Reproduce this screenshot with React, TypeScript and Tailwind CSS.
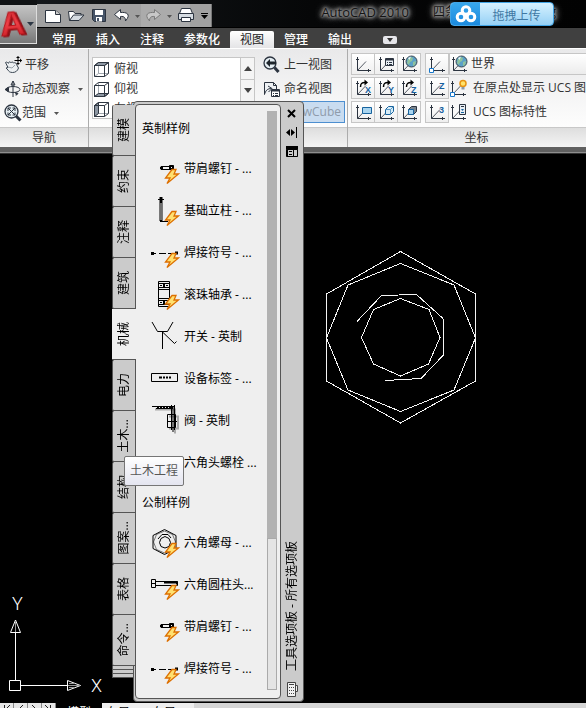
import type { ReactNode } from "react";

const ribbonTabs = ["常用", "插入", "注释", "参数化", "视图", "管理", "输出"];

const paletteTabs = [
  "建模", "约束", "注释", "建筑", "机械", "电力", "土木...", "结构", "图案...", "表格", "命令...",
];

const imperialTools = [
  { label: "带肩螺钉 - ...", icon: "screw", flash: true },
  { label: "基础立柱 - ...", icon: "post", flash: true },
  { label: "焊接符号 - ...", icon: "weld", flash: true },
  { label: "滚珠轴承 - ...", icon: "bearing", flash: true },
  { label: "开关 - 英制", icon: "switch", flash: false },
  { label: "设备标签 - ...", icon: "tag", flash: false },
  { label: "阀 - 英制", icon: "valve", flash: false },
  { label: "六角头螺栓 ...", icon: "bolt", flash: false },
];

const metricTools = [
  { label: "六角螺母 - ...", icon: "nut", flash: true },
  { label: "六角圆柱头...", icon: "bolt", flash: true },
  { label: "带肩螺钉 - ...", icon: "screw", flash: true },
  { label: "焊接符号 - ...", icon: "weld", flash: true },
];

export default function App() {
  return (
    <div className="relative flex h-screen flex-col overflow-hidden bg-black font-['Open_Sans','Noto_Sans_CJK_SC',sans-serif] text-xs leading-4 text-[#333]">
      <Header />
      <Ribbon />
      <div className="h-[5px] shrink-0 bg-[#606060]" />
      <div className="h-px shrink-0 bg-[#8e8e8e]" />
      <Drawing />
      <LayoutTabs />
      <ToolPalette />
    </div>
  );
}

/* ---------- HEADER ---------- */

function Header() {
  return (
    <header className="flex h-12 shrink-0 bg-[#404040]">
      <div className="bg-[#404040]">
        <div className="h-[5px] bg-[#101214]" />
        <button
          aria-label="应用程序菜单"
          className="flex h-[39px] w-[37px] items-center border-r border-b border-[#ddd] bg-linear-to-b from-[#c4c4c4] via-[#a2a2a2] to-[#777]"
        >
          <svg className="overflow-visible" width="36" height="38" viewBox="0 0 36 38">
            <defs>
              <linearGradient id="logo" x1="0" y1="0" x2="0" y2="1">
                <stop offset="0" stopColor="#c3222a" />
                <stop offset="0.500" stopColor="#ee4047" />
                <stop offset="1" stopColor="#c0141b" />
              </linearGradient>
            </defs>
            <text
              className="drop-shadow-[2px_1px_0_#8c1117]"
              x="0"
              y="30"
              transform="rotate(-6 12 20)"
              fill="url(#logo)"
              stroke="#b5161d"
              fontFamily="Liberation Sans"
              fontWeight="700"
              fontSize="34"
            >
              A
            </text>
            <path d="M27 17h7l-3.500 4z" fill="#2c3644" />
          </svg>
        </button>
      </div>
      <div className="min-w-0 flex-1">
        <div className="flex h-7 border-b border-black bg-linear-to-r from-[#15181b] via-[#060708] to-[#020202]">
          <QuickAccess />
          <div className="flex min-w-0 flex-1 items-center justify-end whitespace-nowrap pr-[30px] pb-1 text-[#141414] [text-shadow:0_0_3px_#999,0_0_3px_#999,0_0_5px_#999,0_0_5px_#999,0_0_8px_#888,0_0_8px_#888]">
            <span className="text-[13px]">AutoCAD 2010</span>
            <span className="ml-6 flex w-[123px] justify-between">
              <span>四条</span>
              <span>g</span>
            </span>
          </div>
          <button className="absolute top-[2px] right-[32px] flex h-[24px] w-[104px] items-center overflow-hidden rounded-sm border border-[#43a5e5] bg-linear-to-b from-[#d6f1ff] to-[#96d1f5] text-[#3f78a3]">
            <span className="grid h-full w-[29px] place-items-center bg-linear-to-b from-[#37a7ec] to-[#1b8ade]">
              <svg width="22" height="18" viewBox="0 0 22 18" fill="none" stroke="#fff" strokeWidth="3">
                <circle cx="11" cy="5.500" r="3.800" />
                <circle cx="6" cy="12" r="3.800" />
                <circle cx="16" cy="12" r="3.800" />
              </svg>
            </span>
            <span className="flex-1 pt-1 text-center">拖拽上传</span>
          </button>
        </div>
        <nav className="flex h-5 pl-[5px]">
          {ribbonTabs.map((tab) => (
            <button
              key={tab}
              className={
                tab === "视图"
                  ? "mt-[3px] rounded-t-xs bg-linear-to-b from-white to-[#e4e4e6] px-[10px] leading-4 text-[#222]"
                  : "mt-[3px] px-[10px] leading-4 font-medium text-white"
              }
            >
              {tab}
            </button>
          ))}
          <button aria-label="最小化功能区" className="mt-2 ml-[21px] grid h-[8px] w-[14px] place-items-center rounded-xs bg-[#e6e6ea]">
            <svg width="6" height="4" viewBox="0 0 6 4"><path d="M0 0h6L3 4z" fill="#333" /></svg>
          </button>
        </nav>
      </div>
    </header>
  );
}

function QuickAccess() {
  return (
    <div className="mt-1 h-[23px] w-[175px] shrink-0 border-r border-[#777] bg-[#a1a1a1]">
      <svg width="174" height="23" viewBox="38 4 174 23" fill="#fff" stroke="#2c3440">
        <path d="M142 4h49v23h-49z" fill="#ababab" stroke="none" />
        <path d="M46.500 10.500h10l5 4v8h-15z" />
        <path d="M56.500 10.500v4h5" fill="#ccc" />
        <path d="M70.500 20.500l-1-9h5l1.500 2h6v3" />
        <path d="M70.500 20.500l4-5.500h10.500l-5 5.500z" fill="#d6dce2" />
        <path d="M93.500 9.500h13v12h-11l-2-2z" fill="#465468" />
        <path d="M96 10h8v5h-8zM97 17h6v4.500h-6z" stroke="none" />
        <path d="M98 18h2v3h-2z" fill="#465468" stroke="none" />
        <path d="M121.500 9.500l-6 5 6 5v-3c4-.5 5 1.500 5 4.500 6-7 1-9-5-8.500z" />
        <path d="M136 15h5l-2.500 3zM168 15h5l-2.500 3z" fill="#555" stroke="none" />
        <path d="M155.500 9.500l6 5-6 5v-3c-4-.5-5 1.500-5 4.500-6-7-1-9 5-8.500z" fill="#c8c8c8" stroke="#7a7a7a" />
        <path d="M182.500 8.500h9l2 5h-13z" />
        <path d="M179.500 13.500h15v6h-15z" fill="#d6dce2" />
        <path d="M182.500 17.500h9v4h-9z" />
        <path d="M202 13h7v1h-7zM202 15h7l-3.500 4z" fill="#000" stroke="none" />
      </svg>
    </div>
  );
}

/* ---------- RIBBON ---------- */

function Ribbon() {
  return (
    <section className="flex shrink-0 overflow-hidden border-t border-white bg-white">
      <Panel title="导航" className="w-[89px]">
        <div className="pt-1 pl-1">
          <NavButton label="平移" icon={<PanIcon />} />
          <NavButton label="动态观察" icon={<OrbitIcon />} arrow />
          <NavButton label="范围" icon={<ExtentsIcon />} arrow />
        </div>
      </Panel>
      <Panel title="视图" className="w-[259px]">
        <div className="flex h-full pl-[3px]">
          <div className="mt-2 flex h-[62px] w-[163px] border border-[#c6c6c6] bg-white">
            <ul className="flex-1 overflow-hidden pt-px">
              <ViewItem label="俯视" face="M1.500 4.500l4-3h10l-4 3z" />
              <ViewItem label="仰视" face="M1.500 15.500l4-3h10l-4 3z" />
              <ViewItem label="左视" face="M1.500 4.500l4-3v11l-4 3z" />
            </ul>
            <div className="w-[14px] border-l border-[#c6c6c6] bg-[#f5f5f5]">
              <button aria-label="向上" className="grid h-[22px] w-full place-items-center border-b border-[#c6c6c6]">
                <svg width="8" height="5" viewBox="0 0 8 5"><path d="M0 5h8L4 0z" fill="#444" /></svg>
              </button>
              <button aria-label="向下" className="grid h-[22px] w-full place-items-center border-b border-[#c6c6c6]">
                <svg width="8" height="5" viewBox="0 0 8 5"><path d="M0 0h8L4 5z" fill="#444" /></svg>
              </button>
            </div>
          </div>
          <div className="pt-1">
            <button className="flex h-6 items-center gap-1 pl-2">
              <PreviousViewIcon />
              上一视图
            </button>
            <button className="flex h-6 items-center gap-1 pl-2">
              <NamedViewIcon />
              命名视图
            </button>
            <button className="flex h-[22px] w-[90px] items-center justify-end border border-[#4d8fd0] bg-[#c9dcf0] pr-[3px] text-[#8f9baa]">
              ViewCube
            </button>
          </div>
        </div>
      </Panel>
      <Panel title="坐标" className="w-[258px]">
        <div className="flex flex-col gap-[2px] pt-1 pl-[3px]">
          <div className="flex h-[22px] gap-1">
            <ButtonGroup>
              <AxisIcon />
              <AxisIcon>
                <path d="M8.500 3.500h8v7h-8z" fill="#e8eef4" stroke="#2c3440" />
                <path d="M9 4h7v1.500H9z" fill="#2c3440" />
                <path d="M10 7.500h1M12 7.500h3M10 9.500h1M12 9.500h3" stroke="#2c3440" />
              </AxisIcon>
              <AxisIcon><Globe /></AxisIcon>
            </ButtonGroup>
            <ButtonGroup>
              <AxisIcon><OriginMark /></AxisIcon>
            </ButtonGroup>
            <button className="-ml-1 flex flex-1 items-center border border-[#c6c6c6] bg-linear-to-b from-white to-[#ececec]">
              <AxisIcon><Globe /></AxisIcon>
              <span className="pl-[3px]">世界</span>
            </button>
          </div>
          <div className="flex h-[22px] gap-1">
            <ButtonGroup>
              <AxisIcon><Turn letter="X" /></AxisIcon>
              <AxisIcon><Turn letter="Y" /></AxisIcon>
              <AxisIcon><Turn letter="Z" /></AxisIcon>
            </ButtonGroup>
            <ButtonGroup>
              <AxisIcon><Glyph x={11} y={10} size={9}>Z</Glyph></AxisIcon>
            </ButtonGroup>
            <button className="-ml-1 flex items-center gap-[6px] whitespace-nowrap">
              <AxisIcon>
                <OriginMark />
                <circle cx="14" cy="4.500" r="3" fill="#ffe36b" stroke="#e79312" strokeWidth="1.500" />
                <path d="M12.500 8h3v2.500h-3z" fill="#8c98a4" />
              </AxisIcon>
              在原点处显示 UCS 图标
            </button>
          </div>
          <div className="flex h-[22px] gap-1">
            <ButtonGroup>
              <AxisIcon><path d="M8.500 4.500h9v6h-9z" fill="#a9d5f0" stroke="#17639e" /></AxisIcon>
              <AxisIcon>
                <path d="M8.500 6.500l3-3h5v5l-3 3h-5z" fill="#d9edf8" stroke="#17639e" />
                <path d="M8.500 6.500h5v5M13.500 6.500l3-3" fill="none" stroke="#5c9ac5" />
              </AxisIcon>
              <AxisIcon>
                <path d="M8.500 6.500l3-3h5v5l-3 3h-5z" fill="#7a858f" stroke="#2c3440" />
                <path d="M8.500 6.500h5v5h-5z" fill="#a9d5f0" stroke="#17639e" />
              </AxisIcon>
            </ButtonGroup>
            <ButtonGroup>
              <AxisIcon><Glyph x={11} y={10} size={9}>3</Glyph></AxisIcon>
            </ButtonGroup>
            <button className="-ml-1 flex items-center gap-[6px] whitespace-nowrap">
              <AxisIcon>
                <path d="M10.500 1.500h6v10h-6z" fill="#e8eef4" stroke="#2c3440" />
                <path d="M12 3.500h3" stroke="#2c3440" />
                <path d="M12 6h3l-1.500 2zM12 9h3v1h-3z" fill="#17639e" />
              </AxisIcon>
              UCS 图标特性
            </button>
          </div>
        </div>
      </Panel>
    </section>
  );
}

function Panel({ title, className, children }: { title: string; className: string; children: ReactNode }) {
  return (
    <div className={`shrink-0 border-r border-[#acacac] ${className}`}>
      <div className="h-[78px] bg-linear-to-b from-[#e9e9ea] to-[#fdfdfd]">{children}</div>
      <h2 className="h-5 border-t border-[#c8c8c8] bg-linear-to-b from-[#dedede] to-[#f4f4f4] text-center leading-5">
        {title}
      </h2>
    </div>
  );
}

function NavButton({ label, icon, arrow }: { label: string; icon: ReactNode; arrow?: boolean }) {
  return (
    <button className="flex h-6 items-center whitespace-nowrap">
      {icon}
      <span className={arrow ? "" : "pl-[3px]"}>{label}</span>
      {arrow && (
        <svg className="ml-2" width="5" height="3" viewBox="0 0 5 3">
          <path d="M0 0h5L2.500 3z" fill="#555" />
        </svg>
      )}
    </button>
  );
}

function ViewItem({ label, face }: { label: string; face: string }) {
  return (
    <li className="flex h-5 items-center gap-1">
      <svg width="17" height="17" viewBox="0 0 17 17" fill="none" stroke="#2f3742">
        <path d="M5.500 1.500v11h10M1.500 15.500l4-3" stroke="#a0a6ae" />
        <path d={face} fill="#8e98a4" />
        <path d="M1.500 4.500h10v11h-10zM1.500 4.500l4-3h10v11l-4 3M11.500 4.500l4-3" />
      </svg>
      {label}
    </li>
  );
}

function ButtonGroup({ children }: { children: ReactNode }) {
  const items = Array.isArray(children) ? children : [children];
  return (
    <div className="flex border border-[#c6c6c6]">
      {items.map((child, i) => (
        <button
          key={i}
          className={
            i > 0
              ? "grid w-[23px] place-items-center border-l border-[#c6c6c6] bg-linear-to-b from-white to-[#efefef]"
              : "grid w-[22px] place-items-center bg-linear-to-b from-white to-[#efefef]"
          }
        >
          {child}
        </button>
      ))}
    </div>
  );
}

/* ---------- RIBBON ICONS ---------- */

function AxisIcon({ children }: { children?: ReactNode }) {
  return (
    <svg className="shrink-0 overflow-visible" width="18" height="18" viewBox="0 0 18 18">
      <path d="M3.500 2v13.500H17" fill="none" stroke="#2c3440" />
      <path d="M2 4.500h3M14.500 14v3" stroke="#2c3440" />
      <path d="M3.500 15.500l8.500-9" stroke="#2c3440" strokeWidth="0.800" />
      {children}
    </svg>
  );
}

function Globe() {
  return (
    <g>
      <circle cx="11.500" cy="6.500" r="5.500" fill="#5aa0c8" stroke="#3b4650" />
      <path d="M8 4l3-2 2 1-1 3-2 1-1 3-2-2zM13 7l3-1-1 4-2 1z" fill="#8fc29b" />
      <path d="M8 3l3-1.500L9.500 5z" fill="#e6f6fa" />
    </g>
  );
}

function OriginMark() {
  return <path d="M1.500 13.500h4v4h-4z" fill="#fff" stroke="#1877c9" />;
}

function Glyph({ x, y, size, children }: { x: number; y: number; size: number; children: string }) {
  return (
    <text x={x} y={y} fill="#155f9f" fontFamily="Liberation Sans" fontWeight="700" fontSize={size}>
      {children}
    </text>
  );
}

function Turn({ letter }: { letter: string }) {
  return (
    <g>
      <path d="M6.500 8c0-3.500 1-4.500 4.500-4.500" fill="none" stroke="#000" strokeWidth="1.500" />
      <path d="M10.500 .5v6L14 3.500z" />
      <Glyph x={11} y={14} size={9}>{letter}</Glyph>
    </g>
  );
}

function PanIcon() {
  return (
    <svg width="18" height="18" viewBox="0 0 18 18">
      <path d="M1.500 6.500c1-1 2 0 3 .8 0-1.800 2-1.800 2.500-.5.500-1.200 2-1 2.500.2 1.500-.8 2.500 0 3 1.500l2 3.500c-1 3-3 4.500-6 4.500-3 0-4-1.500-4.500-2.500l-2-2 2-.5-2.500-5z" fill="#edf0f2" stroke="#3a4652" />
      <path d="M4 11l4 1 3-3" fill="none" stroke="#9aa3ab" />
      <path d="M14 1v7M10.500 4.500h7" stroke="#000" />
      <path d="M14 0l2 2h-4zM14 9l-2-2h4zM18 4.500l-2 2v-4z" />
    </svg>
  );
}

function OrbitIcon() {
  return (
    <svg width="18" height="18" viewBox="0 0 18 18" fill="none" stroke="#2c3440">
      <path d="M9 1v16M9 1L7 5h4z" />
      <ellipse cx="9" cy="9.500" rx="7" ry="3" />
      <path d="M1 9.500l3.500-2v4zM11 12.500l3 1-2 2" fill="#2c3440" />
    </svg>
  );
}

function ExtentsIcon() {
  return (
    <svg width="18" height="18" viewBox="0 0 18 18" fill="none" stroke="#2c3440">
      <circle cx="7.500" cy="7.500" r="6.500" fill="#e5eef3" strokeWidth="1.300" />
      <path d="M4 4l7 7M11 4l-7 7" />
      <path d="M4 7V4h3M8.500 4H11v3M4 8.500V11h3M8.500 11H11V8.500" />
      <path d="M12 12l4.500 4.500" strokeWidth="3" />
    </svg>
  );
}

function PreviousViewIcon() {
  return (
    <svg width="17" height="18" viewBox="0 0 17 18" fill="none" stroke="#2c3440">
      <circle cx="7" cy="7" r="6" fill="#e5eef3" strokeWidth="1.300" />
      <path d="M3 7l4-4v2.500h6v3H7V11z" fill="#1e252c" stroke="none" />
      <path d="M11.500 11.500l4 4.500" strokeWidth="3" />
    </svg>
  );
}

function NamedViewIcon() {
  return (
    <svg width="17" height="18" viewBox="0 0 17 18" fill="none" stroke="#2c3440">
      <path d="M1.500 14.500v-12h9l3 3v4" fill="#eef1f4" />
      <path d="M10.500 2.500v3h3M1.500 14.500c1-4 3-6 7-6M5 6l4 2.500L5.500 12" />
      <path d="M8.500 9.500h8v7h-8z" fill="#fff" />
      <path d="M9 10h7v1.500H9z" fill="#2c3440" stroke="none" />
      <path d="M10 13.500h1M12 13.500h3M10 15.500h1M12 15.500h3" />
    </svg>
  );
}

/* ---------- DRAWING AREA ---------- */

function Drawing() {
  return (
    <main className="relative min-h-0 flex-1 border-t border-[#333] bg-black">
      <svg className="absolute top-[97px] left-[326px]" width="151" height="174" viewBox="0 0 151 174" fill="none" stroke="#f4f4f4" shapeRendering="crispEdges">
        <path d="M74.500.5L149.500 43v87l-75 42L.5 130V43z" />
        <path d="M74.500 12.500L128 34l21.500 53L128 139l-53.500 21.500L22 139 .5 87 22 34z" />
        <path d="M74.500 47.500L103 58.500l11 28L102.500 113l-28 12L47.500 113 35.500 86.500l12-28z" />
        <path d="M31 70.500L55.500 44.500l35-1L117 67.500l1 36L95 127.500l-36 2" />
      </svg>
      <svg className="absolute bottom-[7px] left-[8px]" width="96" height="102" viewBox="0 0 96 102" fill="none" stroke="#fff">
        <path d="M1.500 86.500h11v10h-11zM7.500 86V38M13 91.500h47" />
        <path d="M7.500 26L2.500 38.500h10zM59.500 86.500v10l13-5z" />
        <path d="M7.500 27v11M60 91.500h12M61 89.500h6M61 93.500h6" stroke="#999" />
        <g fill="#fff" stroke="none" fontFamily="Roboto" fontWeight="300" fontSize="18">
          <text x="4" y="16">Y</text>
          <text x="83" y="98">X</text>
        </g>
      </svg>
    </main>
  );
}

function LayoutTabs() {
  return (
    <footer className="flex h-[5px] shrink-0 overflow-hidden bg-[#d6d6d6] text-black">
      <svg width="56" height="5" viewBox="0 0 56 5" className="shrink-0">
        <path d="M0 0h56v5H0z" fill="#e6e6e6" />
        <path d="M13.500 0v5M27.500 0v5M41.500 0v5M55.500 0v5" stroke="#888" />
        <path d="M4.500 2v3M10 2L7 5M23 2l-3 3M32 2l3 3M45 2l3 3M50.500 2v3" stroke="#222" />
      </svg>
      <button className="h-5 w-[46px] shrink-0 bg-black text-white">模型</button>
      <button className="h-5 w-[46px] shrink-0 bg-[#eee] pl-1 text-left">布局1 /</button>
      <button className="h-5 w-[46px] shrink-0 bg-[#eee] pl-1 text-left">布局2 /</button>
    </footer>
  );
}

/* ---------- TOOL PALETTE ---------- */

function ToolPalette() {
  return (
    <aside className="absolute top-[101px] left-[112px] flex text-black">
      <div className="mt-1 w-[21px] self-start">
        {paletteTabs.map((tab) => (
          <button
            key={tab}
            className={
              tab === "机械"
                ? "relative z-10 grid h-[51px] w-[24px] place-items-center border-b border-[#555] bg-[#efefef]"
                : "relative grid h-[51px] w-[23px] place-items-center rounded-l-xs border-b border-l border-[#555] bg-[#cbcbcb]"
            }
          >
            <span className="rotate-180 whitespace-nowrap [text-orientation:sideways] [writing-mode:vertical-rl]">
              {tab}
            </span>
          </button>
        ))}
        <div className="h-1 border-b border-l border-[#555] bg-[#cbcbcb]" />
        <div className="h-1 border-b border-l border-[#555] bg-[#cbcbcb]" />
        <div className="h-1 border-b border-l border-[#555] bg-[#cbcbcb]" />
      </div>
      <div className="flex rounded-sm border border-[#555] bg-[#cbcbcb] py-[2px] pl-px">
        <div className="flex w-[146px] rounded-sm border border-[#555] bg-[#efefef] pb-2">
          <div className="min-w-0 flex-1 whitespace-nowrap">
            <h3 className="h-[43px] pt-4 pl-[6px]">英制样例</h3>
            {imperialTools.map((tool) => (
              <ToolRow key={tool.label} {...tool} />
            ))}
            <h3 className="h-[38px] pt-[11px] pl-[6px]">公制样例</h3>
            {metricTools.map((tool) => (
              <ToolRow key={tool.label} {...tool} />
            ))}
          </div>
          <div className="mt-[6px] mr-[3px] flex w-[10px] flex-col bg-[#b2b2b2]">
            <div className="h-[427px]" />
            <div className="flex-1 border border-[#aaa] bg-[#e4e4e4]" />
          </div>
        </div>
        <div className="flex w-[22px] flex-col items-center">
          <PaletteButton label="关闭"><path d="M2 2l7 7M9 2l-7 7" stroke="#000" strokeWidth="2" /></PaletteButton>
          <PaletteButton label="自动隐藏"><path d="M0 5.500L4 2v7zM5 2l4 3.500L5 9zM10 0h1v11h-1z" /></PaletteButton>
          <PaletteButton label="特性">
            <path d="M0 0h12v3H0zM.5 3.500h11v7H.5z" stroke="#000" />
            <path d="M2 4h5v6H2zM8 4h3v6H8z" fill="#cbcbcb" />
            <path d="M3 5.500h3M3 8.500h3" stroke="#000" />
          </PaletteButton>
          <div className="flex-1" />
          <h2 className="rotate-180 whitespace-nowrap [text-orientation:sideways] [writing-mode:vertical-rl]">
            工具选项板 - 所有选项板
          </h2>
          <svg className="mt-[10px]" width="12" height="18" viewBox="0 0 12 18" fill="#f1f1f1" stroke="#444">
            <path d="M1.500 1.500h8v14h-8zM9.500 4.500h2v6h-2z" />
            <path d="M3 3.500h5M3 6.500h1M5 6.500h1M7 6.500h1M3 9.500h1M5 9.500h1M7 9.500h1M3 12.500h1M5 12.500h1M7 12.500h1" />
          </svg>
        </div>
      </div>
      <div
        role="tooltip"
        className="absolute top-[355px] left-[12px] z-20 rounded-xs border border-[#767676] bg-linear-to-b from-white to-[#e4e5f0] px-[5px] py-[6px] leading-4 text-[#575757]"
      >
        土木工程
      </div>
    </aside>
  );
}

function PaletteButton({ label, children }: { label: string; children: ReactNode }) {
  return (
    <button aria-label={label} className="grid h-[19px] place-items-center">
      <svg width="12" height="11" viewBox="0 0 12 11">{children}</svg>
    </button>
  );
}

function ToolRow({ label, icon, flash }: { label: string; icon: string; flash: boolean }) {
  return (
    <button className="flex h-[42px] items-center gap-[3px] pl-[13px]">
      <svg width="32" height="32" viewBox="0 0 32 32" fill="none" stroke="#000">
        {toolShapes[icon]}
        {flash && (
          <path d="M23 16.500h4l-2 4.500h4.500L18 30.500l3-5.500h-4.500z" fill="#ffe070" stroke="#dd6f00" strokeWidth="1.300" />
        )}
      </svg>
      {label}
    </button>
  );
}

const toolShapes: Record<string, ReactNode> = {
  screw: (
    <g>
      <path d="M12 13.500h9v3h-9z" />
      <path d="M20.500 12.500h4v4h-4z" fill="#000" />
      <path d="M22 14.500h1" stroke="#fff" />
      <path d="M11 15h3" strokeWidth="2" />
    </g>
  ),
  post: (
    <g>
      <path d="M12 2v24" strokeWidth="3" />
      <path d="M12 8v17" stroke="#ddd" />
      <path d="M9 4.500h6M11 26.500h8" />
    </g>
  ),
  weld: (
    <g>
      <path d="M2 16.500h5M10 16.500h7M19 16.500h4M25 16.500h4" />
      <path d="M2 16.500h3M26 16h3" strokeWidth="3" />
    </g>
  ),
  bearing: (
    <g>
      <path d="M9.500 2.500h11v25h-11zM9.500 10.500h11M9.500 19.500h11M10 4.500h10M10 8.500h10M10 21.500h10M10 25.500h10" />
      <path d="M11 6.500h8M11 23.500h8" strokeDasharray="2 1" />
      <path d="M15 5v3M15 22v3" strokeWidth="2" />
    </g>
  ),
  switch: <path d="M3 1l5.500 9.500h10L24 1M13.500 10v18M13.500 11l12 11.500 2-2" />,
  tag: (
    <g>
      <path d="M2.500 10.500h26v8h-26z" />
      <path d="M10 14.500h3M14 14.500h2M17 14.500h2M20 14.500h2" strokeWidth="2" />
    </g>
  ),
  valve: (
    <g>
      <path d="M6 4.500h20v24M20 11.500h9v12h-9" stroke="#aaa" strokeWidth="2" />
      <path d="M3 1.500h22M7 3.500h17" />
      <path d="M8 2.500h16" strokeWidth="3" strokeDasharray="2 1" />
      <path d="M22.500 0v25M25.500 0v25M18.500 9.500h8v13h-8zM18 16.500h10" />
      <path d="M24 2v25" />
    </g>
  ),
  nut: (
    <g>
      <path d="M15.500 2.500l11.500 6v13l-11.500 6-11.500-6v-13z" />
      <path d="M15.500 4l8 3.500 3 7.500-3 7.500-8 3.500-8-3.500L4.500 15l3-7.500z" strokeWidth="0.500" />
      <path d="M16 9.500l4 2 1.500 4-1.500 4-4 1.500-4-1.500-1.500-4 1.500-4z" />
      <path d="M9 12l4-4.500h6l3 3.500" />
    </g>
  ),
  bolt: (
    <g>
      <path d="M2.500 10.500h4v8h-4zM6.500 12.500h22v4h-22zM2.500 14.500h4" />
      <path d="M15 13.500h13v2" strokeWidth="2" />
    </g>
  ),
};
